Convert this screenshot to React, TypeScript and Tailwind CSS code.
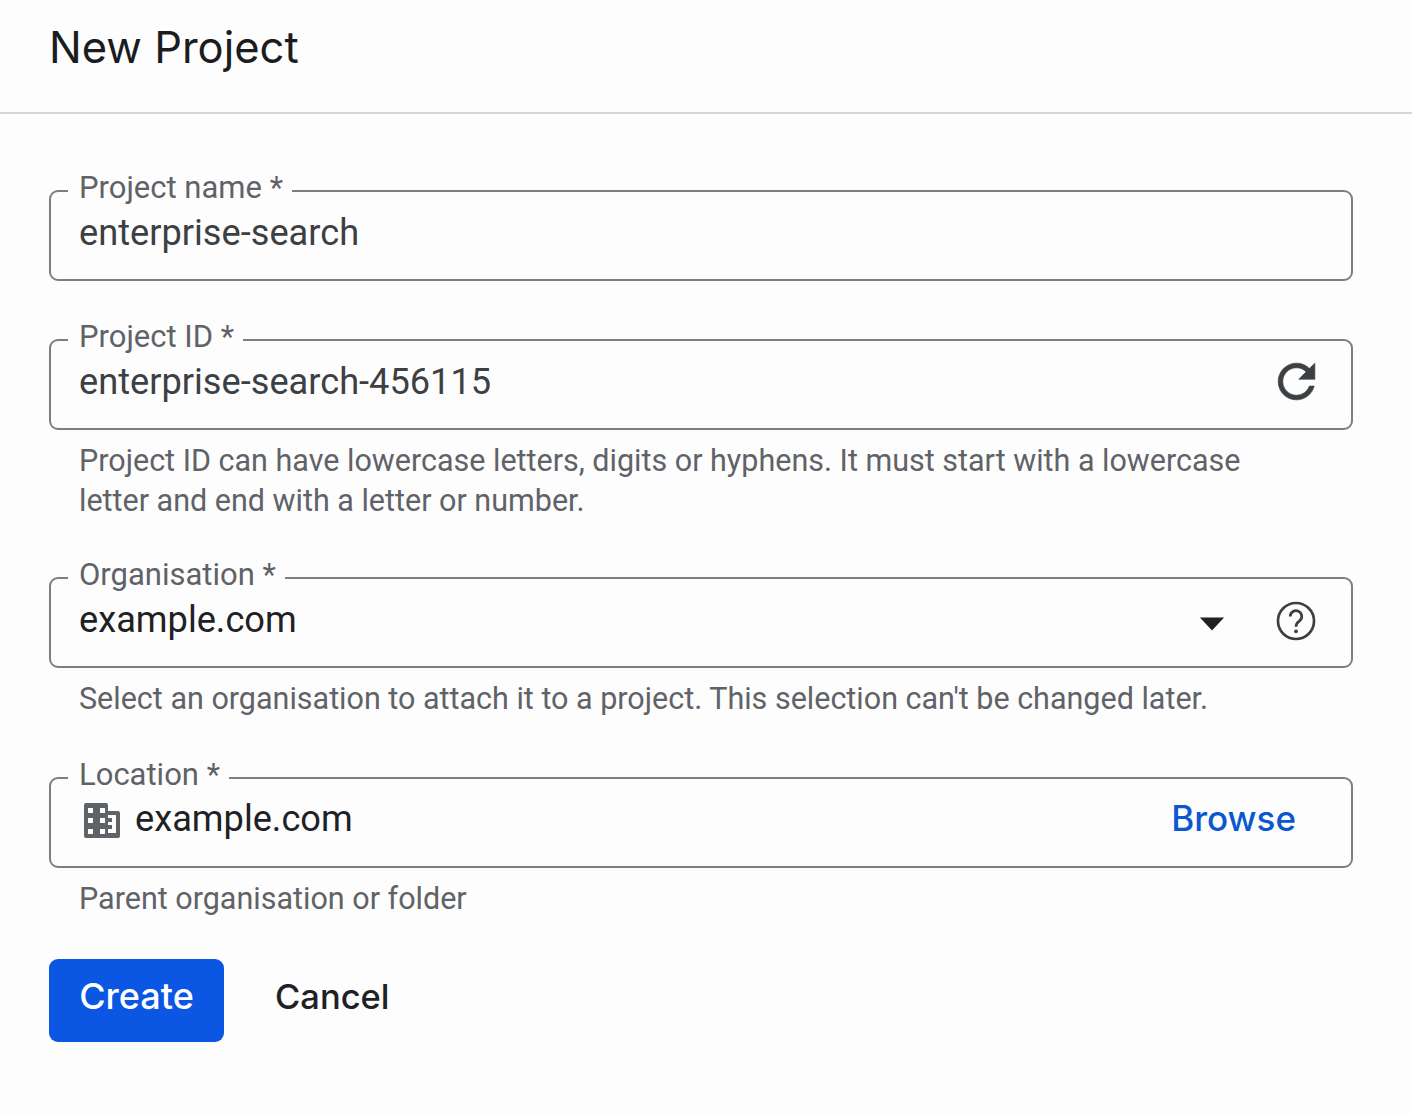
import type { ReactNode } from 'react'

const roboto = "font-['Roboto',sans-serif]"
const heading = "font-['Inter',sans-serif]"

function Field({ label, children }: { label: string; children: ReactNode }) {
  return (
    <div className="relative flex h-[91px] w-[1304px] items-start rounded-[9px] border-2 border-[#7a7f85] pl-[28px] pr-[32px] pt-[19px]">
      {/* Label sits in a notch cut out of the top border */}
      <span className="absolute -top-[24px] left-[17px] h-[40px] whitespace-nowrap bg-[#fdfdfd] pl-[11px] pr-[9px] text-[31px] leading-[40px] text-[#5f6368]">
        {label}
      </span>
      {children}
    </div>
  )
}

function Help({ children }: { children: ReactNode }) {
  return <p className="mt-[11px] w-[1200px] pl-[30px] text-[30.5px] leading-[40px] text-[#5f6368]">{children}</p>
}

export default function App() {
  return (
    <div className={`h-[1114px] w-[1412px] overflow-hidden bg-[#fdfdfd] ${roboto}`}>
      <header className="flex h-[114px] items-start border-b-2 border-[#d3d6dc] pl-[49px] pt-[19px]">
        <h1 className={`text-[43.5px] leading-[56px] text-[#1a1c1e] ${heading}`}>New Project</h1>
      </header>

      <div className="flex flex-col pl-[49px] pt-[76px]">
        <Field label="Project name *">
          <span className="text-[36.2px] leading-[44px] text-[#3c4043]">enterprise-search</span>
        </Field>

        <div className="mt-[58px]">
          <Field label="Project ID *">
            <span className="text-[36.2px] leading-[44px] text-[#3c4043]">enterprise-search-456115</span>
            <svg className="-mr-[5px] ml-auto -mt-[6px] h-[55px] w-[55px] fill-[#3c4043] stroke-[#3c4043] stroke-[0.3]" viewBox="0 0 24 24">
              <path d="M17.65 6.35A7.958 7.958 0 0 0 12 4c-4.42 0-7.99 3.58-7.99 8s3.57 8 7.99 8c3.73 0 6.84-2.55 7.73-6h-2.08A5.99 5.99 0 0 1 12 18c-3.31 0-6-2.69-6-6s2.69-6 6-6c1.66 0 3.14.69 4.22 1.78L13 11h7V4l-2.35 2.35z" />
            </svg>
          </Field>
          <Help>
            Project ID can have lowercase letters, digits or hyphens. It must start with a lowercase letter and end with a letter or number.
          </Help>
        </div>

        <div className="mt-[56px]">
          <Field label="Organisation *">
            <span className="text-[36.2px] leading-[44px] text-[#202124]">example.com</span>
            <svg className="ml-auto mr-[48px] mt-[19px] h-[14px] w-[26px] fill-[#202124]" viewBox="0 0 28 14">
              <path d="M1 0h26L14 14z" />
            </svg>
            <svg className="h-[46px] w-[46px] fill-none stroke-[#3c4043] stroke-[1.4]" viewBox="0 0 24 24">
              <circle cx="12" cy="12" r="9.4" />
              <path d="M9 9.6a3 3 0 1 1 4.7 2.5c-1.1.7-1.7 1.3-1.7 2.9" />
              <circle className="fill-[#3c4043] stroke-none" cx="12" cy="17.4" r="1" />
            </svg>
          </Field>
          <Help>Select an organisation to attach it to a project. This selection can't be changed later.</Help>
        </div>

        <div className="mt-[58px]">
          <Field label="Location *">
            <svg className="ml-[4px] mt-[4px] h-[38px] w-[38px] shrink-0 fill-[#5f6368]" viewBox="0 0 38 38" fillRule="evenodd">
              <path d="M1 3a2 2 0 0 1 2-2h20a2 2 0 0 1 2 2v6h10a2 2 0 0 1 2 2v23a2 2 0 0 1-2 2H3a2 2 0 0 1-2-2V3zm4 3v5h5V6H5zm12 0v5h5V6h-5zM5 16v5h5v-5H5zm12 0v5h5v-5h-5zM5 27v5h5v-5H5zm12 0v5h5v-5h-5zm8-14v3h4v4h-4v3h4v4h-4v4h8V13h-8z" />
            </svg>
            <span className="ml-[14px] -mt-[1px] text-[36.2px] leading-[44px] text-[#202124]">example.com</span>
            <span className={`ml-auto mr-[23px] -mt-[2px] text-[35px] font-medium leading-[44px] text-[#0b57d0] ${heading}`}>Browse</span>
          </Field>
          <Help>Parent organisation or folder</Help>
        </div>

        <div className={`mt-[40px] flex items-start ${heading}`}>
          <button className="h-[83px] w-[175px] rounded-[9px] bg-[#0b57e3] pb-[10px] text-[36px] font-medium text-white">Create</button>
          <button className="ml-[51px] h-[75px] text-[34.5px] font-medium text-[#202124]">Cancel</button>
        </div>
      </div>
    </div>
  )
}
